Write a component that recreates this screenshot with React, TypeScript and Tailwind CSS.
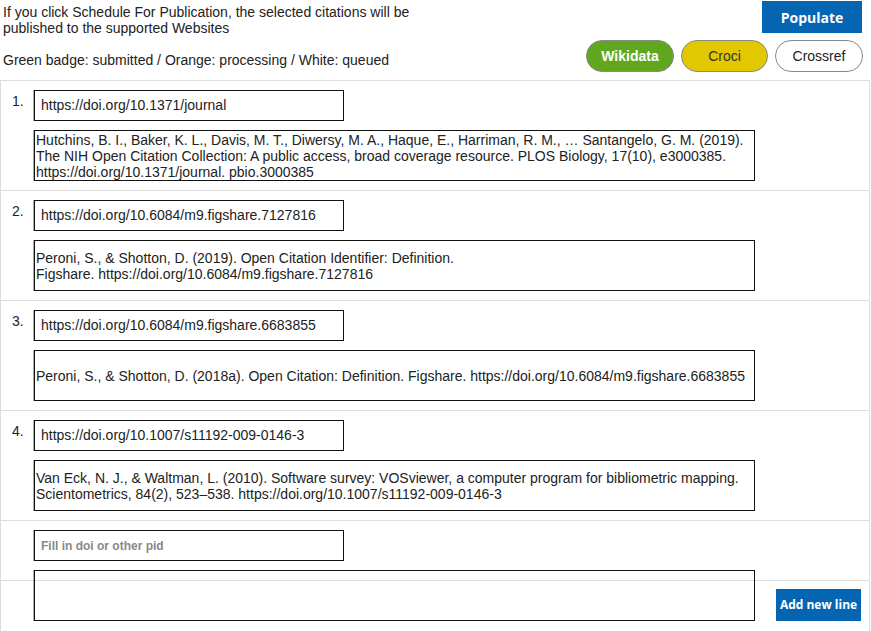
import React from 'react'

type Citation = {
  pid: string
  text: string
}

const citations: Citation[] = [
  {
    pid: 'https://doi.org/10.1371/journal',
    text:
      'Hutchins, B. I., Baker, K. L., Davis, M. T., Diwersy, M. A., Haque, E., Harriman, R. M., … Santangelo, G. M. (2019). The NIH Open Citation Collection: A public access, broad coverage resource. PLOS Biology, 17(10), e3000385. https://doi.org/10.1371/journal. pbio.3000385',
  },
  {
    pid: 'https://doi.org/10.6084/m9.figshare.7127816',
    text:
      'Peroni, S., & Shotton, D. (2019). Open Citation Identifier: Definition.\nFigshare. https://doi.org/10.6084/m9.figshare.7127816',
  },
  {
    pid: 'https://doi.org/10.6084/m9.figshare.6683855',
    text:
      'Peroni, S., & Shotton, D. (2018a). Open Citation: Definition. Figshare. https://doi.org/10.6084/m9.figshare.6683855',
  },
  {
    pid: 'https://doi.org/10.1007/s11192-009-0146-3',
    text:
      'Van Eck, N. J., & Waltman, L. (2010). Software survey: VOSviewer, a computer program for bibliometric mapping. Scientometrics, 84(2), 523–538. https://doi.org/10.1007/s11192-009-0146-3',
  },
]

const boxBorder = 'border border-[#111] shadow-[-1px_0_0_#aaa]'

function CitationRow({ index, citation }: { index: number; citation: Citation }) {
  return (
    <div className="flex border-b border-[#ddd] py-[9px]">
      <div className="w-[33px] shrink-0 pl-[11px] pt-[3px] leading-4">{index}.</div>
      <div className="flex flex-col gap-[9px]">
        <div className={`${boxBorder} flex h-[31px] w-[310px] items-center px-[6px]`}>
          {citation.pid}
        </div>
        <div className={`${boxBorder} flex h-[51px] w-[721px] items-center px-[1px] leading-4`}>
          <span className="whitespace-pre-line">{citation.text}</span>
        </div>
      </div>
    </div>
  )
}

export default function App() {
  return (
    <div className="w-[871px] bg-white text-[14px] text-[#222] font-['Liberation_Sans',Arial,sans-serif]">
      {/* header */}
      <div className="flex h-[80px] justify-between">
        <div className="pl-[3px] pt-[4px] leading-4">
          <p>If you click Schedule For Publication, the selected citations will be</p>
          <p>published to the supported Websites</p>
          <p className="mt-4">Green badge: submitted / Orange: processing / White: queued</p>
        </div>
        <div className="flex flex-col items-end gap-[7px] pr-[8px] pt-[1px]">
          <button className="mr-[1px] h-[32px] w-[100px] bg-[#0466b2] font-['Open_Sans',sans-serif] text-[14px] font-bold text-white">
            Populate
          </button>
          <div className="flex gap-[7px]">
            <span className="flex h-[32px] w-[88px] items-center justify-center rounded-full border border-[#888] bg-[#60a71d] font-bold text-white">
              Wikidata
            </span>
            <span className="flex h-[32px] w-[87px] items-center justify-center rounded-full border border-[#888] bg-[#e2c800] text-[#333]">
              Croci
            </span>
            <span className="flex h-[32px] w-[88px] items-center justify-center rounded-full border border-[#888] bg-white text-[#222]">
              Crossref
            </span>
          </div>
        </div>
      </div>

      {/* citation list */}
      <div className="w-[870px] border border-b-0 border-[#ddd]">
        {citations.map((c, i) => (
          <CitationRow key={c.pid} index={i + 1} citation={c} />
        ))}

        <div className="flex h-[60px] border-b border-[#ddd] pt-[9px]">
          <div className="w-[33px] shrink-0" />
          <input
            placeholder="Fill in doi or other pid"
            className={`${boxBorder} h-[31px] w-[310px] px-[6px] text-[12px] font-bold outline-none placeholder:text-[#888]`}
          />
        </div>

        <div className="flex h-[51px] border-b border-[#ddd]">
          <div className="w-[33px] shrink-0" />
          <textarea
            className={`${boxBorder} relative mt-[-11px] h-[51px] w-[721px] resize-none bg-transparent px-[1px] outline-none`}
          />
          <button className="ml-auto mr-[8px] mt-[8px] h-[32px] w-[85px] bg-[#0466b2] font-['Open_Sans',sans-serif] text-[12px] font-bold text-white">
            Add new line
          </button>
        </div>
      </div>
    </div>
  )
}
